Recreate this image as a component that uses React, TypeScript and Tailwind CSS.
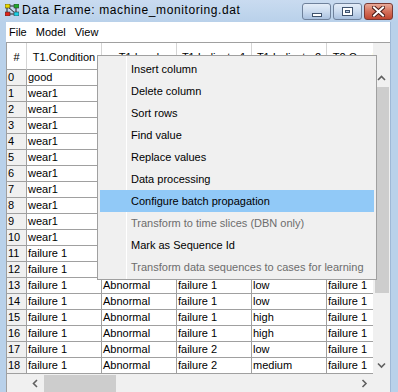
import React from 'react';

// Data frame window with a popup menu open over the grid
const columns = ['T1.Condition', 'T1.Load', 'T1.Indicator1', 'T1.Indicator2', 'T2.Condition'];

const rows: string[][] = [
  ['good', 'Normal', 'good', 'low', 'good'],
  ...Array.from({ length: 10 }, () => ['wear1', 'Normal', 'wear1', 'low', 'good']),
  ['failure 1', 'Abnormal', 'failure 1', 'low', 'failure 1'],
  ['failure 1', 'Abnormal', 'failure 1', 'low', 'failure 1'],
  ['failure 1', 'Abnormal', 'failure 1', 'low', 'failure 1'],
  ['failure 1', 'Abnormal', 'failure 1', 'low', 'failure 1'],
  ['failure 1', 'Abnormal', 'failure 1', 'high', 'failure 1'],
  ['failure 1', 'Abnormal', 'failure 1', 'high', 'failure 1'],
  ['failure 1', 'Abnormal', 'failure 2', 'low', 'failure 1'],
  ['failure 1', 'Abnormal', 'failure 2', 'medium', 'failure 1'],
];

const menuItems = [
  { label: 'Insert column' },
  { label: 'Delete column' },
  { label: 'Sort rows' },
  { label: 'Find value' },
  { label: 'Replace values' },
  { label: 'Data processing' },
  { label: 'Configure batch propagation', active: true },
  { label: 'Transform to time slices (DBN only)', disabled: true },
  { label: 'Mark as Sequence Id' },
  { label: 'Transform data sequences to cases for learning', disabled: true },
];

const font = "font-['Liberation_Sans',Arial,sans-serif]";

const AppIcon = () => (
  <svg width="14" height="12" viewBox="0 0 14 12">
    <path d="M2 2 L11 2 M2 2 L2 10 M11 2 L11 10 M2 10 L11 10 M2 2 L11 10" stroke="#222" strokeWidth="1" />
    <rect x="0" y="0" width="5" height="4" fill="#e8d800" stroke="#333" strokeWidth="0.6" />
    <rect x="9" y="0" width="5" height="4" fill="#1faa2a" stroke="#333" strokeWidth="0.6" />
    <rect x="0" y="8" width="5" height="4" fill="#e2231a" stroke="#333" strokeWidth="0.6" />
    <rect x="9" y="8" width="5" height="4" fill="#19d0e6" stroke="#333" strokeWidth="0.6" />
  </svg>
);

const Chevron = ({ dir }: { dir: 'up' | 'down' | 'left' | 'right' }) => {
  const d = {
    up: 'M1 5 L4.5 1.5 L8 5',
    down: 'M1 1.5 L4.5 5 L8 1.5',
    left: 'M5 1 L1.5 4.5 L5 8',
    right: 'M1.5 1 L5 4.5 L1.5 8',
  }[dir];
  const vertical = dir === 'up' || dir === 'down';
  return (
    <svg width={vertical ? 9 : 7} height={vertical ? 7 : 9} viewBox={vertical ? '0 0 9 7' : '0 0 7 9'}>
      <path d={d} fill="none" stroke="#606060" strokeWidth="1.6" />
    </svg>
  );
};

const CaptionButton = ({ kind }: { kind: 'min' | 'max' | 'close' }) => {
  const isClose = kind === 'close';
  return (
    <div
      className={`w-[29px] h-[17px] rounded-[3px] border flex items-center justify-center ${
        isClose
          ? 'border-[#7a3a34] bg-gradient-to-b from-[#e9a999] via-[#d4705a] to-[#c0452f]'
          : 'border-[#6f819b] bg-gradient-to-b from-[#e4edf8] via-[#cbdbef] to-[#a9c1df]'
      }`}
    >
      {kind === 'min' && (
        <div className="mt-[6px] w-[10px] h-[4px] bg-white border border-[#40536e]" />
      )}
      {kind === 'max' && (
        <div className="w-[11px] h-[9px] bg-white border border-[#40536e] flex items-center justify-center">
          <div className="w-[5px] h-[3px] bg-[#b9cce4] border border-[#40536e]" />
        </div>
      )}
      {isClose && (
        <svg width="13" height="11" viewBox="0 0 13 11">
          <path d="M2 1.5 L11 9.5 M11 1.5 L2 9.5" stroke="#4a1d18" strokeWidth="4" strokeLinecap="square" />
          <path d="M2 1.5 L11 9.5 M11 1.5 L2 9.5" stroke="#ffffff" strokeWidth="2" strokeLinecap="square" />
        </svg>
      )}
    </div>
  );
};

export default function App() {
  return (
    <div className={`${font} relative w-[398px] h-[392px] overflow-hidden bg-[#b9d1ea] flex flex-col`}>
      {/* title bar */}
      <div className="h-[22px] shrink-0 flex items-start bg-gradient-to-b from-[#c9dbf0] to-[#b9d1ea]">
        <div className="ml-[5px] mt-[4px]">
          <AppIcon />
        </div>
        <span className="ml-[3px] mt-[2px] text-[12px] tracking-[0.6px] leading-[16px] text-black">
          Data Frame: machine_monitoring.dat
        </span>
        <div className="flex-1" />
        <div className="mt-[3px] mr-[5px] flex gap-[2px]">
          <CaptionButton kind="min" />
          <CaptionButton kind="max" />
          <CaptionButton kind="close" />
        </div>
      </div>

      <div className="flex flex-1">
        <div className="w-[6px] shrink-0" />
        <div className="w-[384px] shrink-0 flex flex-col">
          {/* menu bar */}
          <div className="h-[20px] bg-white flex items-center gap-[9px] pl-[3px] text-[11px] text-black">
            <span>File</span>
            <span>Model</span>
            <span>View</span>
          </div>

          {/* scroll pane */}
          <div className="flex-1 border-t border-l border-[#a0a0a0] bg-[#f0f0f0] text-[11px] text-black grid grid-cols-[20px_346px_17px] grid-rows-[27px_304px_18px]">
            {/* header row */}
            <div className="bg-white border-r border-b border-r-[#d5d5d5] border-b-[#a0a0a0] flex items-center justify-center pt-[3px]">
              #
            </div>
            <div className="overflow-hidden flex bg-white">
              {columns.map((c) => (
                <div
                  key={c}
                  className="w-[75px] shrink-0 border-r border-b border-r-[#d5d5d5] border-b-[#a0a0a0] flex items-center justify-center pt-[3px] whitespace-nowrap overflow-hidden"
                >
                  {c}
                </div>
              ))}
            </div>
            <div className="bg-[#f0f0f0]" />

            {/* row header */}
            <div className="flex flex-col overflow-hidden">
              {rows.map((_, i) => (
                <div
                  key={i}
                  className="h-[16px] shrink-0 border-r border-b border-[#a0a0a0] bg-[#f0f0f0] pl-[1px] leading-[15px]"
                >
                  {i}
                </div>
              ))}
            </div>

            {/* data viewport */}
            <div className="flex flex-col overflow-hidden bg-white">
              {rows.map((r, i) => (
                <div key={i} className="flex h-[16px] shrink-0">
                  {r.map((v, j) => (
                    <div
                      key={j}
                      className="w-[75px] shrink-0 border-r border-b border-[#a0a0a0] pl-[1px] leading-[15px] whitespace-nowrap overflow-hidden"
                    >
                      {v}
                    </div>
                  ))}
                </div>
              ))}
            </div>

            {/* vertical scrollbar */}
            <div className="flex flex-col bg-[#f0f0f0]">
              <div className="h-[17px] flex items-center justify-center">
                <Chevron dir="up" />
              </div>
              <div className="h-[206px] ml-[2px] mr-[1px] bg-[#cdcdcd]" />
              <div className="flex-1" />
              <div className="h-[17px] flex items-center justify-center">
                <Chevron dir="down" />
              </div>
            </div>

            {/* horizontal scrollbar */}
            <div className="bg-[#f0f0f0]" />
            <div className="flex bg-[#f0f0f0]">
              <div className="w-[17px] flex items-center justify-center">
                <Chevron dir="left" />
              </div>
              <div className="w-[72px] mt-[1px] bg-[#cdcdcd]" />
              <div className="flex-1" />
              <div className="w-[17px] flex items-center justify-center">
                <Chevron dir="right" />
              </div>
            </div>
            <div className="bg-[#f0f0f0]" />
          </div>
        </div>
        <div className="w-[8px] shrink-0 border-l border-[#9fb8d6]" />
      </div>

      {/* context menu */}
      <div className="absolute left-[97px] top-[55px] w-[280px] border border-[#a0a0a0] bg-[#f0f0f0] px-[2px] pt-[2px] pb-[1px] text-[11px]">
        <div className="absolute left-[28px] top-0 bottom-0 w-px bg-white" />
        {menuItems.map((m) => (
          <div
            key={m.label}
            className={`relative h-[22px] flex items-center pl-[31px] whitespace-nowrap ${
              m.active ? 'bg-[#91c9f7]' : ''
            } ${m.disabled ? 'text-[#6d6d6d]' : 'text-black'}`}
          >
            {m.label}
          </div>
        ))}
      </div>
    </div>
  );
}
